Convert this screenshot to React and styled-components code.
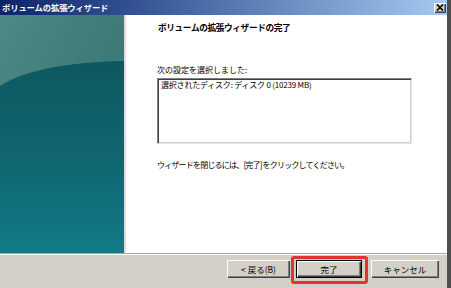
import React from "react";
import styled, { createGlobalStyle } from "styled-components";

const Global = createGlobalStyle`
  html, body { margin: 0; padding: 0; background: #ffffff; }
  body { font-family: "Noto Sans CJK JP", "Liberation Sans", sans-serif; }
  * { box-sizing: border-box; }
`;

const Window = styled.div`
  width: 451px;
  height: 288px;
  display: flex;
  flex-direction: column;
  border-right: 4px solid #4f4f4f;
  background: #d4d0c8;
  overflow: hidden;
`;

const TitleBar = styled.div`
  height: 15px;
  flex: none;
  display: flex;
  align-items: center;
  justify-content: space-between;
  padding: 0 1px 0 2px;
  background: linear-gradient(to right, #0a246a 0%, #3a5a9a 35%, #a6caf0 100%);
`;

const TitleText = styled.span`
  color: #ffffff;
  font-weight: bold;
  font-size: 8.3px;
  line-height: 15px;
  letter-spacing: -0.1px;
  white-space: nowrap;
`;

const CloseButton = styled.div`
  width: 12px;
  height: 10px;
  display: flex;
  align-items: center;
  justify-content: center;
  background: #d4d0c8;
  box-shadow: inset 1px 1px 0 #ffffff, inset -1px -1px 0 #404040, inset -2px -2px 0 #808080;
`;

const Body = styled.div`
  flex: none;
  height: 238px;
  display: flex;
  background: #ffffff;
`;

const SidePanel = styled.div`
  width: 126px;
  flex: none;
  border-right: 2px solid #dcdcdc;
  display: flex;
`;

const Content = styled.div`
  flex: 1;
  padding: 7px 0 0 31px;
  display: flex;
  flex-direction: column;
  color: #000000;
`;

const Heading = styled.div`
  font-weight: bold;
  font-size: 8.7px;
  line-height: 11px;
  white-space: nowrap;
  margin-left: 1px;
  letter-spacing: -0.4px;
`;

const Label = styled.div`
  font-size: 8px;
  line-height: 10px;
  white-space: nowrap;
  margin-top: ${(p) => p.$top}px;
  letter-spacing: ${(p) => p.$ls || 0}px;
`;

const ListBox = styled.div`
  width: 255px;
  height: 66px;
  margin-top: 3px;
  padding: 1px 3px;
  background: #ffffff;
  border-top: 1px solid #808080;
  border-left: 1px solid #808080;
  border-right: 1px solid #e6e4df;
  border-bottom: 1px solid #e6e4df;
  box-shadow: inset 1px 1px 0 #404040, inset -1px -1px 0 #d4d0c8;
  font-size: 8px;
  line-height: 10px;
  letter-spacing: -0.2px;
  white-space: nowrap;
`;

const Separator = styled.div`
  height: 2px;
  flex: none;
  border-top: 1px solid #a8a8a8;
  border-bottom: 1px solid #ffffff;
`;

const Footer = styled.div`
  flex: 1;
  display: flex;
  justify-content: flex-end;
  align-items: flex-start;
  padding: 5px 8px 0 0;
  background: #d4d0c8;
`;

const Button = styled.div`
  position: relative;
  width: ${(p) => p.$w}px;
  height: 18px;
  margin-left: ${(p) => p.$gap}px;
  display: flex;
  align-items: center;
  justify-content: center;
  font-size: 8.5px;
  color: #000;
  background: #d4d0c8;
  white-space: nowrap;
  box-shadow: ${(p) =>
    p.$default
      ? "inset 1px 1px 0 #000, inset -1px -1px 0 #000, inset 2px 2px 0 #fff, inset -2px -2px 0 #404040, inset -3px -3px 0 #808080"
      : "inset 1px 1px 0 #fff, inset -1px -1px 0 #404040, inset -2px -2px 0 #808080"};
`;

const Highlight = styled.span`
  position: absolute;
  left: -5px;
  right: -6px;
  top: -4px;
  bottom: -6px;
  border: 3px solid #e2342a;
  border-radius: 3px;
  pointer-events: none;
`;

function PanelArt() {
  return (
    <svg width="124" height="238" viewBox="0 0 124 238" preserveAspectRatio="none">
      <defs>
        <linearGradient id="topg" x1="0" y1="0" x2="1" y2="1">
          <stop offset="0" stopColor="#4d8985" />
          <stop offset="1" stopColor="#2f6d6d" />
        </linearGradient>
        <linearGradient id="botg" x1="0" y1="0" x2="0" y2="1">
          <stop offset="0" stopColor="#0d5860" />
          <stop offset="0.5" stopColor="#0f6670" />
          <stop offset="1" stopColor="#127a86" />
        </linearGradient>
      </defs>
      <rect x="0" y="0" width="124" height="238" fill="url(#topg)" />
      <path d="M0 71 Q 35 48 124 46 L124 238 L0 238 Z" fill="url(#botg)" />
    </svg>
  );
}

function CloseIcon() {
  return (
    <svg width="8" height="7" viewBox="0 0 8 7">
      <path d="M1 0.5 L7 6.5 M7 0.5 L1 6.5" stroke="#000" strokeWidth="1.6" />
    </svg>
  );
}

export default function App() {
  return (
    <>
      <Global />
      <Window>
        <TitleBar>
          <TitleText>ボリュームの拡張ウィザード</TitleText>
          <CloseButton>
            <CloseIcon />
          </CloseButton>
        </TitleBar>
        <Body>
          <SidePanel>
            <PanelArt />
          </SidePanel>
          <Content>
            <Heading>ボリュームの拡張ウィザードの完了</Heading>
            <Label $top={32}>次の設定を選択しました:</Label>
            <ListBox>選択されたディスク: ディスク 0 (10239 MB)</ListBox>
            <Label $top={16} $ls={-0.8}>ウィザードを閉じるには、[完了] をクリックしてください。</Label>
          </Content>
        </Body>
        <Separator />
        <Footer>
          <Button $w={63} $gap={0}>&lt; 戻る(B)</Button>
          <Button $w={66} $gap={6} $default>
            完了
            <Highlight />
          </Button>
          <Button $w={68} $gap={9}>キャンセル</Button>
        </Footer>
      </Window>
    </>
  );
}
